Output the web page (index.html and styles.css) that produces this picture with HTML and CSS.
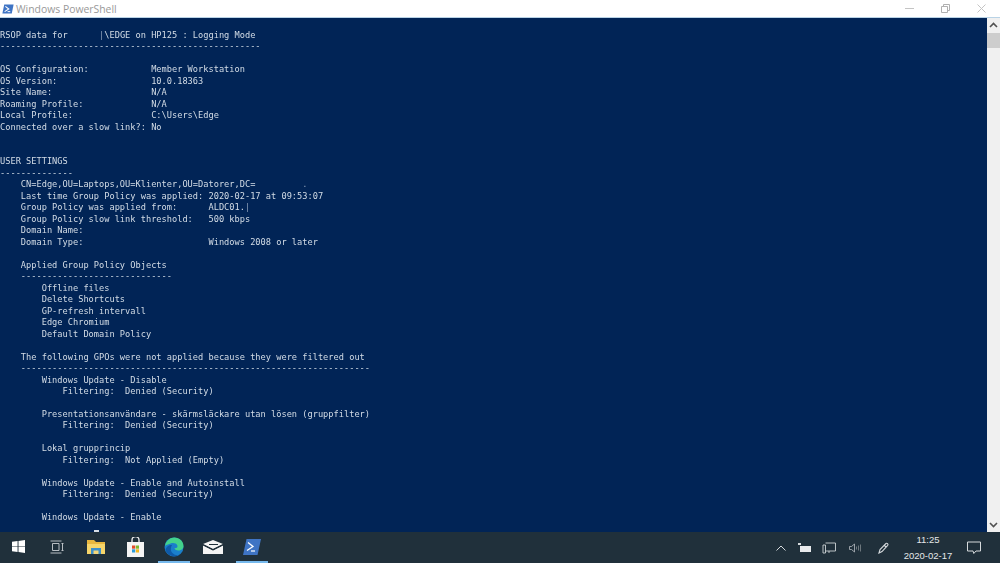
FILE: index.html
```html
<!DOCTYPE html>
<html lang="en">
<head>
<meta charset="utf-8">
<title>Windows PowerShell</title>
<link rel="stylesheet" href="styles.css">
</head>
<body>
<div class="window">
  <header class="titlebar">
    <svg class="ps-icon" viewBox="0 0 16 16" width="12" height="12"><path d="M3 2h12.5L13 14H.5z" fill="#3f74c4"/><path d="M4.5 4.5L9 8l-5.5 3.5" fill="none" stroke="#fff" stroke-width="1.5"/><path d="M7.5 11.5h3.5" stroke="#fff" stroke-width="1.3"/></svg>
    <span class="title">Windows PowerShell</span>
    <div class="controls">
      <svg class="ctl" viewBox="0 0 9 9" width="9" height="9"><path d="M0 4.500h9" stroke="#c4c4c4"/></svg>
      <svg class="ctl" viewBox="0 0 9 9" width="9" height="9"><path d="M.5 2.500h6v6h-6zM2.500 2.500v-2h6v6h-2" fill="none" stroke="#b0b0b0"/></svg>
      <svg class="ctl" viewBox="0 0 9 9" width="9" height="9"><path d="M.5.500l8 8M8.500.500l-8 8" stroke="#c4c4c4"/></svg>
    </div>
  </header>
  <main class="console">
    <div class="term">
<pre class="output">

RSOP data for      <span class="dim">|</span>\EDGE on HP125 : Logging Mode
--------------------------------------------------

OS Configuration:            Member Workstation
OS Version:                  10.0.18363
Site Name:                   N/A
Roaming Profile:             N/A
Local Profile:               C:\Users\Edge
Connected over a slow link?: No


USER SETTINGS
--------------
    CN=Edge,OU=Laptops,OU=Klienter,OU=Datorer,DC=         <span class="dim">.</span>
    Last time Group Policy was applied: 2020-02-17 at 09:53:07
    Group Policy was applied from:      ALDC01.<span class="dim">|</span>
    Group Policy slow link threshold:   500 kbps
    Domain Name:
    Domain Type:                        Windows 2008 or later

    Applied Group Policy Objects
    -----------------------------
        Offline files
        Delete Shortcuts
        GP-refresh intervall
        Edge Chromium
        Default Domain Policy

    The following GPOs were not applied because they were filtered out
    -------------------------------------------------------------------
        Windows Update - Disable
            Filtering:  Denied (Security)

        Presentationsanvändare - skärmsläckare utan lösen (gruppfilter)
            Filtering:  Denied (Security)

        Lokal grupprincip
            Filtering:  Not Applied (Empty)

        Windows Update - Enable and Autoinstall
            Filtering:  Denied (Security)

        Windows Update - Enable
</pre>
      <div class="caret"></div>
    </div>
    <div class="scrollbar">
      <svg class="arrow" viewBox="0 0 13 15" width="13" height="15"><path d="M3 9l3.500-3.500L10 9" fill="none" stroke="#505050" stroke-width="1.600"/></svg>
      <div class="thumb"></div>
      <div class="track"></div>
      <svg class="arrow" viewBox="0 0 13 15" width="13" height="15"><path d="M3 6l3.500 3.500L10 6" fill="none" stroke="#505050" stroke-width="1.600"/></svg>
    </div>
  </main>
  <footer class="taskbar">
    <div class="apps">
      <div class="app"><svg viewBox="0 0 14 14" width="13" height="13"><path d="M0 2l6-.9V6.600H0zM7 1l7-1v6.600H7zM0 7.400h6v5.500L0 12zM7 7.400h7V14l-7-1z" fill="#fff"/></svg></div>
      <div class="app"><svg viewBox="0 0 14 14" width="14" height="14"><path d="M2.500 3.500h6.500v7H2.500zM.5 1h11M.5 13h11M11.500 3.500h2M11.500 10.500h2M12.500 3.500v7" fill="none" stroke="#c9ced2" stroke-width=".9"/></svg></div>
      <div class="app"><svg viewBox="0 0 20 18" width="20" height="18"><path d="M1 2h7l2 2h9v12H1z" fill="#e8b73f"/><path d="M1 6h18v10H1z" fill="#f6d56a"/><path d="M5 10h10v6H5z" fill="#3d8fc9"/><path d="M7.500 12.500h5V16h-5z" fill="#f3d67a"/></svg></div>
      <div class="app"><svg viewBox="0 0 19 20" width="19" height="20"><path d="M1 5h17v15H1z" fill="#f4f4f4"/><path d="M6 6V3a3.500 3.500 0 017 0v3" fill="none" stroke="#f4f4f4" stroke-width="1.300"/><path d="M6 8.500h3.200v3.200H6z" fill="#e2492b"/><path d="M9.800 8.500H13v3.200H9.800z" fill="#7fb82c"/><path d="M6 12.300h3.200v3.200H6z" fill="#2a9bdc"/><path d="M9.800 12.300H13v3.200H9.800z" fill="#f3b51d"/></svg></div>
      <div class="app active"><svg viewBox="0 0 20 20" width="20" height="20"><circle cx="10" cy="10" r="9.500" fill="#1a7fcb"/><path d="M1 9C2 3.500 6 .5 10.500.5c5 0 9 4 9 8.500 0 3-2.500 4.500-5 4.500-2.500 0-4-1-4-2.200 2.500 0 3.500-1.300 2.800-3C12.300 6 9 5.500 6.500 6.500 3.800 7.500 2 8 1 9z" fill="#43d28c"/><path d="M7 11c-1 4 3 8 8 7-5 3-12 .5-13.500-5C2 9.500 6 7.500 8 8c-.6.800-1 2-1 3z" fill="#0f5aa8"/></svg></div>
      <div class="app"><svg viewBox="0 0 20 14" width="20" height="14"><path d="M0 4L10 0l10 4-10 5z" fill="#f4f4f4"/><path d="M0 5.500l10 5 10-5V14H0z" fill="#f4f4f4"/><path d="M0 4.700l10 5 10-5" fill="none" stroke="#1f2f3a" stroke-width="1.200"/><path d="M6 4.500h9" stroke="#1f2f3a" stroke-width="1"/></svg></div>
      <div class="app active"><svg viewBox="0 0 18 16" width="18" height="16"><path d="M3.500 0H18l-3.500 16H0z" fill="#3f74c4"/><path d="M5 3.500L10 7.500l-6 4" fill="none" stroke="#fff" stroke-width="1.300"/><path d="M8 12h4" stroke="#fff" stroke-width="1.200"/></svg></div>
    </div>
    <div class="tray">
      <svg class="t-chev" viewBox="0 0 10 6" width="10" height="6"><path d="M.5 5.500L5 1l4.500 4.500" fill="none" stroke="#d5d9dc"/></svg>
      <svg class="t-batt" viewBox="0 0 14 10" width="14" height="10"><path d="M0 0h3v2H0z" fill="#d5d9dc"/><path d="M2 3h11v6H2z" fill="#e8eaec"/></svg>
      <svg class="t-net" viewBox="0 0 14 12" width="14" height="12"><path d="M3.500 1h10v8h-10M1 3h2.500v8H1zM7 9v2" fill="none" stroke="#cdd2d5" stroke-width=".9"/></svg>
      <svg class="t-vol" viewBox="0 0 13 10" width="13" height="10"><path d="M.5 3.500h2L5.500 1v8l-3-2.500h-2z" fill="none" stroke="#b8bdc1" stroke-width=".8"/><path d="M7.500 3.500v3M9.500 2.500v5M11.500 1.500v7" stroke="#8f969b" stroke-width=".7"/></svg>
      <svg class="t-pen" viewBox="0 0 12 12" width="12" height="12"><path d="M1 11l1-3.500L8 1.500c1-.8 2.500.7 1.700 1.800L4 9.500zM6.500 3.500l2 2" fill="none" stroke="#d5d9dc" stroke-width="1.100"/></svg>
      <div class="clock"><span>11:25</span><span>2020-02-17</span></div>
      <svg class="t-note" viewBox="0 0 14 14" width="14" height="14"><path d="M.5 1h13v9H9L6.800 12.500 6 10H.5z" fill="none" stroke="#d5d9dc"/></svg>
    </div>
  </footer>
</div>
</body>
</html>
```
FILE: styles.css
```css
* { box-sizing: border-box; }
html, body { margin: 0; height: 100%; overflow: hidden; }
.window {
  width: 1000px;
  height: 563px;
  display: flex;
  flex-direction: column;
  font-family: "Liberation Sans", sans-serif;
}
.titlebar {
  flex: 0 0 18px;
  display: flex;
  align-items: center;
  padding-left: 2px;
  background: #fff;
  border-bottom: 1px solid #b9d3e6;
}
.ps-icon { margin-right: 2px; }
.title { font: 10.400px "Open Sans", sans-serif; color: #999; }
.controls {
  margin-left: auto;
  display: flex;
  gap: 27px;
  padding-right: 14px;
  align-items: center;
}
.console {
  flex: 1;
  min-height: 0;
  display: flex;
  background: #012456;
}
.term {
  flex: 1;
  position: relative;
  overflow: hidden;
  padding-top: .5px;
}
.output {
  margin: 0;
  font-family: "DejaVu Sans Mono", monospace;
  font-size: 8.660px;
  line-height: 11.490px;
  color: #d3dce6;
  white-space: pre;
  filter: blur(.25px);
}
.dim { color: #8a9db8; }
.caret {
  position: absolute;
  left: 94px;
  top: 512px;
  width: 5px;
  height: 2px;
  background: #d6dde6;
}
.scrollbar {
  flex: 0 0 13px;
  display: flex;
  flex-direction: column;
  background: #f0f0f0;
}
.arrow { flex: none; }
.thumb { flex: 0 0 15px; background: #cdcdcd; }
.track { flex: 1; }
.taskbar {
  flex: 0 0 31px;
  display: flex;
  justify-content: space-between;
  background: #20303b;
}
.apps { display: flex; gap: 7px; padding-left: 2px; }
.app {
  width: 32px;
  display: flex;
  align-items: center;
  justify-content: center;
  border-bottom: 2px solid transparent;
}
.active { border-bottom-color: #76b9ed; }
.tray {
  display: flex;
  align-items: center;
  padding-right: 19px;
}
.t-chev { margin-right: 12px; }
.t-batt { margin-right: 10px; }
.t-net { margin-right: 13px; }
.t-vol { margin-right: 16px; }
.t-pen { margin-right: 11px; }
.clock {
  width: 54px;
  display: flex;
  flex-direction: column;
  align-items: center;
  gap: 4px;
  margin-right: 12px;
  font-size: 9.500px;
  line-height: 12px;
  color: #e4e7e9;
}
```
